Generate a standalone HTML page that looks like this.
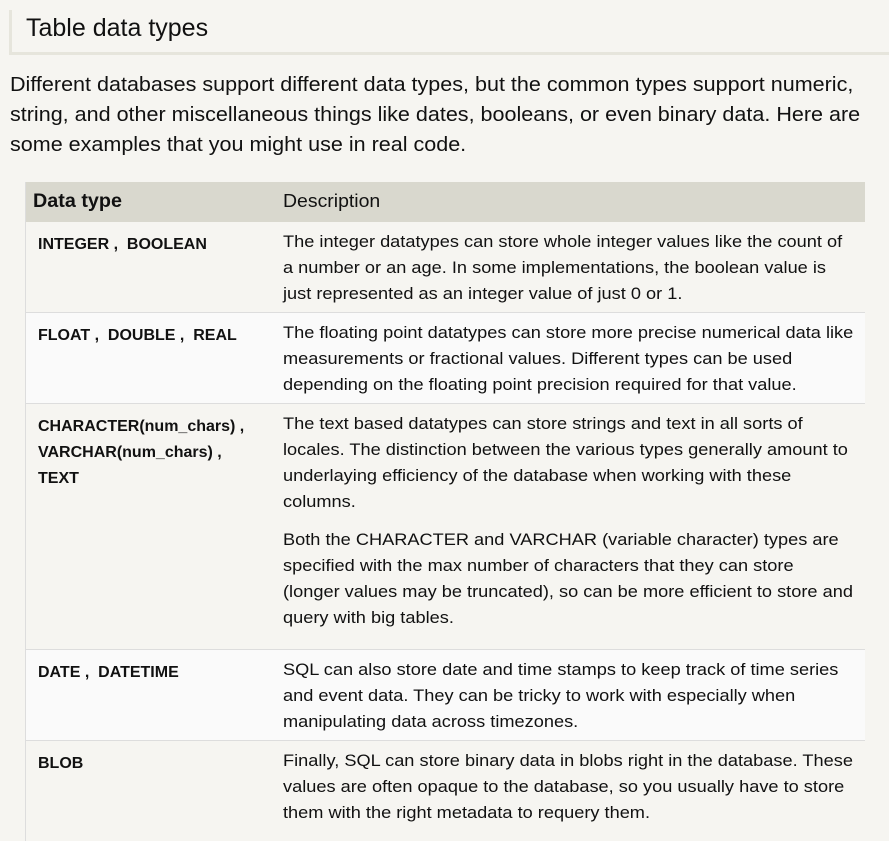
<!DOCTYPE html>
<html><head><meta charset="utf-8"><style>
body{margin:0;background:#f6f5f1;font-family:"Liberation Sans",sans-serif;color:#111;width:889px;height:830px;overflow:hidden;position:relative}
.h{position:absolute;left:9px;top:10px;width:880px;height:42px;border-left:3px solid #e6e5dc;border-bottom:3px solid #e6e5dc;box-sizing:content-box}
.h span{position:absolute;left:14px;top:4px;font-size:25px;color:#111}
.p{position:absolute;left:10px;top:70px;font-size:20px;line-height:30px;white-space:nowrap;color:#111;transform:scaleX(1.077);transform-origin:left}
.t{position:absolute;left:25px;top:182px;width:839px;border-left:1px solid #ddd}
.r{position:relative;border-bottom:1px solid #ddd;box-sizing:border-box}
.c1{position:absolute;left:12px;top:10px;font-weight:bold;font-size:16px;line-height:26px;white-space:nowrap}
.c2{position:absolute;left:257px;top:7px;font-size:17px;line-height:26px;white-space:nowrap;transform:scaleX(1.07);transform-origin:left}
.hd{height:40px;background:#d9d8ce;border:none}
.hd .a{position:absolute;left:7px;top:9px;font-weight:bold;font-size:19px;transform:scaleX(1.04);transform-origin:left}
.hd .b{position:absolute;left:257px;top:9px;font-size:18px;transform:scaleX(1.08);transform-origin:left}
.o{background:#f6f5f1}.e{background:#fafafa}
</style></head><body>
<div class="h"><span>Table data types</span></div>
<div class="p">Different databases support different data types, but the common types support numeric,<br>string, and other miscellaneous things like dates, booleans, or even binary data. Here are<br>some examples that you might use in real code.</div>
<div class="t">
<div class="r hd"><span class="a">Data type</span><span class="b">Description</span></div>
<div class="r o" style="height:91px"><div class="c1">INTEGER ,&nbsp; BOOLEAN</div><div class="c2">The integer datatypes can store whole integer values like the count of<br>a number or an age. In some implementations, the boolean value is<br>just represented as an integer value of just 0 or 1.</div></div>
<div class="r e" style="height:91px"><div class="c1">FLOAT ,&nbsp; DOUBLE ,&nbsp; REAL</div><div class="c2">The floating point datatypes can store more precise numerical data like<br>measurements or fractional values. Different types can be used<br>depending on the floating point precision required for that value.</div></div>
<div class="r o" style="height:246px"><div class="c1">CHARACTER(num_chars) ,<br>VARCHAR(num_chars) ,<br>TEXT</div><div class="c2">The text based datatypes can store strings and text in all sorts of<br>locales. The distinction between the various types generally amount to<br>underlaying efficiency of the database when working with these<br>columns.<div style="height:12px"></div>Both the CHARACTER and VARCHAR (variable character) types are<br>specified with the max number of characters that they can store<br>(longer values may be truncated), so can be more efficient to store and<br>query with big tables.</div></div>
<div class="r e" style="height:91px"><div class="c1">DATE ,&nbsp; DATETIME</div><div class="c2">SQL can also store date and time stamps to keep track of time series<br>and event data. They can be tricky to work with especially when<br>manipulating data across timezones.</div></div>
<div class="r o" style="height:100px;border:none"><div class="c1">BLOB</div><div class="c2">Finally, SQL can store binary data in blobs right in the database. These<br>values are often opaque to the database, so you usually have to store<br>them with the right metadata to requery them.</div></div>
</div>
</body></html>
